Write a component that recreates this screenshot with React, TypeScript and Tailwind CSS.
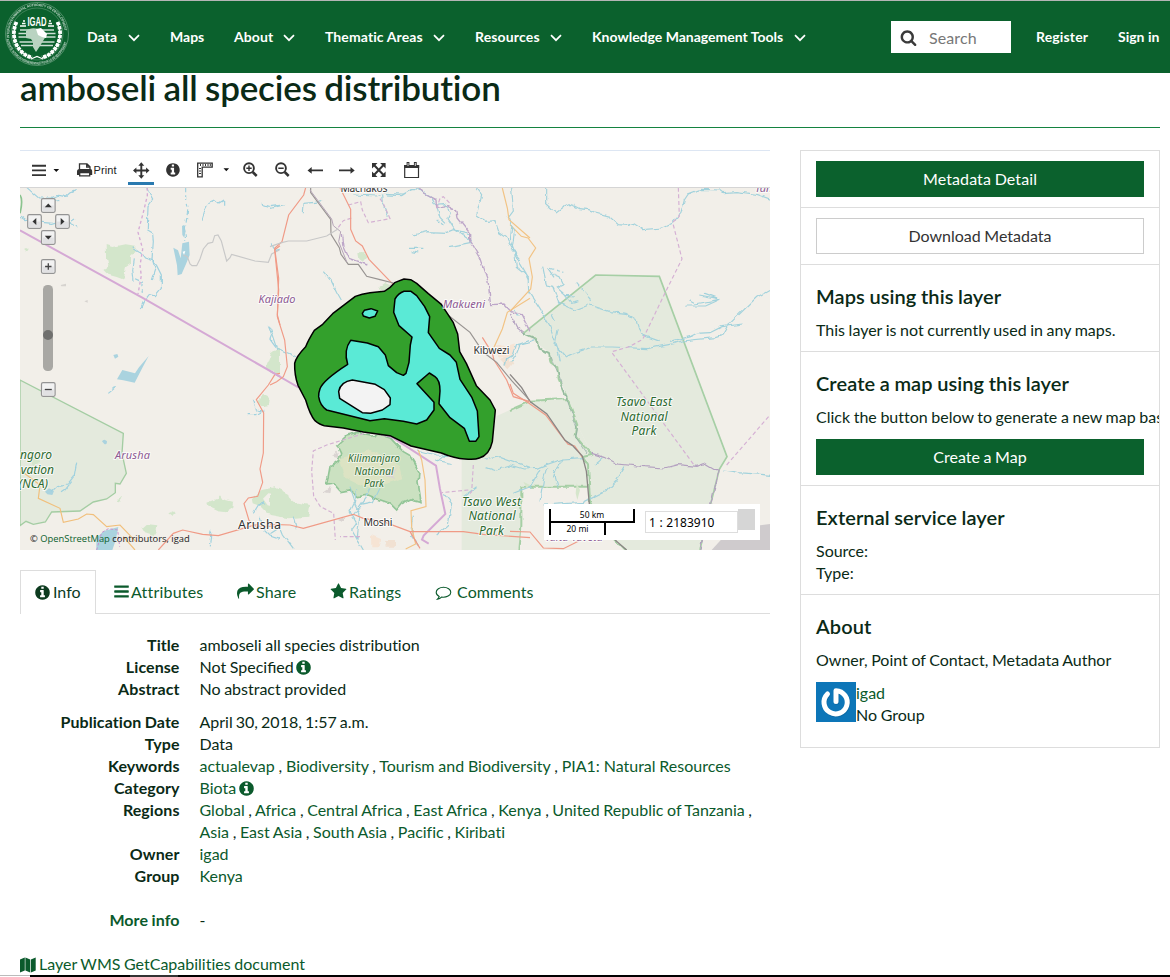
import React from "react";

const FA = {
  info: "M1152 1376v-160q0-14-9-23t-23-9h-96v-512q0-14-9-23t-23-9h-320q-14 0-23 9t-9 23v160q0 14 9 23t23 9h96v320h-96q-14 0-23 9t-9 23v160q0 14 9 23t23 9h448q14 0 23-9t9-23zm-128-896v-160q0-14-9-23t-23-9h-192q-14 0-23 9t-9 23v160q0 14 9 23t23 9h192q14 0 23-9t9-23zm640 416q0 209-103 385.500t-279.500 279.500-385.500 103-385.500-103-279.500-279.500-103-385.500 103-385.500 279.500-279.500 385.500-103 385.500 103 279.500 279.500 103 385.500z",
  bars: "M1664 1344v128q0 26-19 45t-45 19h-1408q-26 0-45-19t-19-45v-128q0-26 19-45t45-19h1408q26 0 45 19t19 45zm0-512v128q0 26-19 45t-45 19h-1408q-26 0-45-19t-19-45v-128q0-26 19-45t45-19h1408q26 0 45 19t19 45zm0-512v128q0 26-19 45t-45 19h-1408q-26 0-45-19t-19-45v-128q0-26 19-45t45-19h1408q26 0 45 19t19 45z",
  share: "M1792 640q0 26-19 45l-512 512q-19 19-45 19t-45-19-19-45v-256h-224q-98 0-175.500 6t-154 21.500-133 42.500-105.500 69.500-80 101-48.500 138.500-17.500 181q0 55 5 123 0 6 2.500 23.500t2.500 26.500q0 15-8.500 25t-23.500 10q-16 0-28-17-7-9-13-22t-13.500-30-10.500-24q-127-285-127-451 0-199 53-333 162-403 875-403h224v-256q0-26 19-45t45-19 45 19l512 512q19 19 19 45z",
  star: "M1728 647q0 22-26 48l-363 354 86 500q1 7 1 20 0 21-10.500 35.500t-30.500 14.500q-19 0-40-12l-449-236-449 236q-22 12-40 12-21 0-31.500-14.500t-10.500-35.500q0-6 2-20l86-500-364-354q-25-27-25-48 0-37 56-46l502-73 225-455q19-41 49-41t49 41l225 455 502 73q56 9 56 46z",
  search: "M1216 832q0-185-131.500-316.500t-316.500-131.500-316.500 131.500-131.500 316.500 131.500 316.500 316.500 131.500 316.500-131.500 131.500-316.500zm512 832q0 52-38 90t-90 38q-54 0-90-38l-343-342q-179 124-399 124-143 0-273.500-55.500t-225-150-150-225-55.500-273.500 55.500-273.500 150-225 225-150 273.500-55.500 273.500 55.500 225 150 150 225 55.500 273.500q0 220-124 399l343 343q37 37 37 90z",
};

function Glyph({ d, size, className = "" }: { d: string; size: number; className?: string }) {
  return (
    <svg width={size} height={size} viewBox="0 0 1792 1792" fill="currentColor" className={"shrink-0 " + className}>
      <path d={d} />
    </svg>
  );
}

function Logo() {
  return (
    <svg width="66" height="66" viewBox="-33 -33 66 66" className="shrink-0" fill="none" stroke="#fff">
      <defs>
        <path id="ringTop" d="M-27.500 4A27.800 27.800 0 1 1 27.500 4" />
        <path id="ringBottom" d="M-30.500 5A31 31 0 0 0 30.500 5" />
      </defs>
      <circle r="31.500" strokeWidth=".7" opacity=".4" />
      <circle r="26" strokeWidth=".6" opacity=".35" />
      <g fill="#fff" stroke="none" fontFamily="Liberation Sans" fontSize="3.500" opacity=".75">
        <text textLength="88" lengthAdjust="spacingAndGlyphs"><textPath href="#ringTop">INTERGOVERNMENTAL AUTHORITY ON DEVELOPMENT</textPath></text>
        <text textLength="82" lengthAdjust="spacingAndGlyphs"><textPath href="#ringBottom">AUTORITÉ INTERGOUVERNEMENTALE POUR LE DÉVELOPPEMENT</textPath></text>
      </g>
      <path d="M-20-12C-28 4 -18 21 -5 23.500M20-12C28 4 18 21 5 23.500" strokeWidth="1" />
      <path d="M-20.500-12C-28 4 -18 21 -5 23.500M20.500-12C28 4 18 21 5 23.500" strokeWidth="3.800" strokeDasharray="3.400 1" />
      <path d="M-6 25l6-2.500 6 2.500" strokeWidth="1.200" />
      <path d="M-17-4h34M-18.500-.5h37M-18.500 3h37M-17.500 8h35M-16 11.500h32" strokeWidth="1.300" opacity=".8" />
      <path d="M-17-8h6M-15-10.500h3.500M-14-13h2M11-8h6M11.500-10.500h3.500M12-13h2" strokeWidth="1.500" />
      <path d="M-11-3c3-3 8-3.500 12-2l8 7-3 5-3 5-4 6-3-5v-5l-2-3-5-1z" fill="#b9d3c1" stroke="none" />
      <path d="M-1-5l5-1 6 6-1 4-4-1-4-2z" fill="#fff" stroke="none" />
      <text x="0" y="-8" textAnchor="middle" textLength="19" lengthAdjust="spacingAndGlyphs" fontFamily="Liberation Sans" fontWeight="700" fontSize="12" fill="#fff" stroke="none">IGAD</text>
    </svg>
  );
}

const Chevron = () => (
  <svg width="12" height="8" viewBox="0 0 12 8" fill="none" stroke="#fff" strokeWidth="1.700" className="mt-[3px] shrink-0">
    <path d="M1 1.200l5 5 5-5" />
  </svg>
);

function NavItem({ label, menu, className }: { label: string; menu?: boolean; className: string }) {
  return (
    <div className={"-mt-[2px] flex shrink-0 items-center justify-between pr-[30px] " + className}>
      <span className="whitespace-nowrap">{label}</span>
      {menu && <Chevron />}
    </div>
  );
}

function Header() {
  return (
    <header className="flex h-[73px] shrink-0 items-center border-t border-[#b5b5b5] bg-[#0b612d] pl-[4px] text-[14px] font-bold text-white">
      <div className="-mt-[6px] mr-[17px] flex"><Logo /></div>
      <NavItem label="Data" menu className="w-[83px] tracking-[0.1px]" />
      <NavItem label="Maps" className="w-[64px]" />
      <NavItem label="About" menu className="w-[91px] tracking-[0.1px]" />
      <NavItem label="Thematic Areas" menu className="w-[150px] tracking-[0.1px]" />
      <NavItem label="Resources" menu className="w-[117px] tracking-[0.150px]" />
      <NavItem label="Knowledge Management Tools" menu className="w-[244px]" />
      <div className="ml-[55px] flex h-[32px] w-[120px] shrink-0 items-center bg-white pl-[9px] text-[16px] font-normal text-[#777]">
        <Glyph d={FA.search} size={17} className="text-[#3a3a3a]" />
        <span className="ml-[12px] mt-px tracking-[0.1px]">Search</span>
      </div>
      <span className="-mt-[2px] ml-[25px] w-[82px] shrink-0 tracking-[0.15px]">Register</span>
      <span className="-mt-[2px] whitespace-nowrap">Sign in</span>
    </header>
  );
}

function Toolbar() {
  return (
    <svg width="750" height="37" viewBox="20 151 750 37" fill="none" stroke="#333" className="block">
      <path d="M32 165.700h14M32 170.400h14M32 175.100h14" strokeWidth="1.900" />
      <path d="M53.500 169h5.600l-2.800 3zM223.500 168.200h5.600l-2.800 3z" fill="#111" stroke="none" />
      <path d="M79.500 170v-6.200h7.500l3 3v3.200M86.700 164v3h3" strokeWidth="1.300" />
      <path d="M77 171.500q0-2.500 2.500-2.500h10.700q2 0 2 2v4h-3v-2.300h-9.300v2.300h-2.900z" fill="#333" stroke="none" />
      <path d="M79.700 172.600h10v3.300h-10z" fill="#fff" strokeWidth="1.300" />
      <text x="93.500" y="174" fontFamily="Liberation Sans" fontSize="11" fill="#222" stroke="none" textLength="23">Print</text>
      <path d="M141.300 164v13M134.500 170.500h13.500" strokeWidth="1.900" />
      <path d="M141.300 162.300l3 3.400h-6zM141.300 178.700l3-3.400h-6zM133 170.500l3.400-3v6zM149.500 170.500l-3.400-3v6z" fill="#333" stroke="none" />
      <path d="M128 182h26v3h-26z" fill="#2a7ab0" stroke="none" />
      <g transform="translate(165 162) scale(.00885)" fill="#333" stroke="none"><path d={FA.info} /></g>
      <path d="M197.700 163.200h14.500v4h-10v9.700h-4.500z" strokeWidth="1.300" />
      <path d="M200.500 164v2M203 164v2M205.500 164v2M208 164v2M210.300 164v2M199 168.500h2M199 171h2M199 173.500h2" strokeWidth="1" />
      <g strokeWidth="1.900">
        <circle cx="249" cy="168.200" r="4.900" /><path d="M252.700 172l4 4" strokeWidth="2.500" />
        <circle cx="281" cy="168.200" r="4.900" /><path d="M284.700 172l4 4" strokeWidth="2.500" />
      </g>
      <path d="M246.300 168.200h5.400M249 165.500v5.400M278.300 168.200h5.400" strokeWidth="1.400" />
      <path d="M309 170.400h14M339 170.400h14" strokeWidth="1.800" />
      <path d="M307.500 170.400l4.200-3.400v6.800zM354.700 170.400l-4.200-3.400v6.800z" fill="#333" stroke="none" />
      <path d="M374 165l9.500 10M383.500 165l-9.500 10" strokeWidth="2" />
      <path d="M372 163h5.500l-5.500 5.500zM385.600 163h-5.500l5.500 5.500zM372 177h5.500l-5.500-5.500zM385.600 177h-5.500l5.500-5.500z" fill="#333" stroke="none" />
      <path d="M404.700 165.700h13.800v11.800h-13.800z" strokeWidth="1.200" />
      <path d="M404.200 165h15v3h-15z" fill="#333" stroke="none" />
      <path d="M408 162v4.500M415.300 162v4.500" strokeWidth="2.800" />
      <path d="M408 163v3M415.300 163v3" stroke="#fff" strokeWidth=".8" />
      <path d="M20 187.500h750" stroke="#d5d5d5" />
    </svg>
  );
}

function WestTerrain() {
  return (
    <g transform="translate(20 180) scale(.33333)">
      <path d="M0 600L310 760 306 820 319 880 300 912 286 910V938L260 957 220 966 180 993 95 996 76 1026 40 1033 18 1024 0 1037z" fill="#e4eadd" stroke="#a4cda3" strokeWidth="4" />
      <path d="M0 45q10 15 0 55" stroke="#8bc48f" strokeWidth="5" />
      <g fill="#d3e6cb" stroke="none" filter="url(#ragged)">
        <path d="M257 195l20 6 40-8 28 4 5 15-20 18 0 20-12 8-6 38-22-8-30-8-12-12 18-10-8-35z" />
        <path d="M562 968l28-10 10-12 8 12 34 8-2 14-20 14-28-3-26-12z" />
        <path d="M366 1045l14-13 32 4-3 20-8 12-26-8z" />
        <path d="M695 955l30-25 40-8 40 20 5 40-30 24-40-8-20-20-22-8z" />
        <path d="M738 560l15-40 27-20v80l-15-3z" />
        <path d="M715 655l15-10 16 10-2 20-20 4-10-12z" />
        <path d="M445 1000l14-6 5 6-8 8zM290 965l14-17 3 5-10 14zM14 205h8v10h-8zM28 835l22-2 8 15-18 8z" />
      </g>
      <path d="M745 940l18 2 8 18-10 20-18-4-14-20z" fill="#f2efe9" />
      <g fill="#aad3df" stroke="none">
        <path d="M460 203l14 8 8 24 5-45 20-5 2 40-10 25-14 32-12 4-2-30zM486 138l6-3 5 18-4 20-6-8zM291 598l16-28 38 10 12-18 29-34-18 34-24 46-34-7zM280 525l12-3 3 8-10 6zM75 935l12-10 15 8-5 12-15-2zM229 1075l22-22 44-12-8 40-10 29h-48zM246 784q6-10 15 0 0 12-8 8z" />
      </g>
      <path d="M488 215l8-2-4 12z" fill="#fff" />
      <g stroke="#9fd1df" strokeWidth="3.500" fill="none" filter="url(#ragged)">
        <path d="M20 22l20 18 16 14 36 0 20-8 26 3 14-13 18-7M95 53l20 10M0 112l15 10 28-4M65 127l33 3 30-9 44 24M150 130l15-10M380 25l18 32-14 20-2 75 16 10 2 22-4 55 14 18 14 28v40l-18 22-20-2-8 10-14 32M338 200l20 14 16 20 24 8 9 28-10 30M340 238l-5 35 4 30M545 122l10-32 12-23 18-8 12 10 14-8v16M725 72l25 8 30-4M757 190l8 25 14-4M745 438l10 25-5 12 18 25M683 704h25l16-8M700 660l10 30 20 4M170 848l-7 40-20 24-30 5-20 20M155 905l-20 25-12 8M262 640l22-18M569 1049l6 20-4 30M700 1000l15-25 20-7M720 1010l10 35 20 20 30 10" />
        <path d="M497 23v40l6 30-8 60 2 32M345 296l22 10-4 32" strokeDasharray="14 9" />
      </g>
      <path d="M490 225l12 5 8 22 6 5 14 0 10-20 10-30 14-17 14-3 6-20 10-2 10 18 16 60 10-10 5-10 70 20 40 4 10-25 23-12" stroke="#c8c8c8" strokeWidth="3.500" />
      <path d="M382 23v24l-12 50-16 60 14 50-8 50 4 30-10 55" stroke="#d5abd5" strokeWidth="4" strokeDasharray="9 8" />
      <path d="M0 151L368 354 780 590" stroke="#d5a9d5" strokeWidth="6" />
      <path d="M0 870l40 30 20 15-5 40 65 30 10 42 45-10 25-15 20 2 40 36 40-5 48 50M310 1070l35 40" stroke="#f1bf7b" strokeWidth="3.500" />
      <path d="M780 197l-16 12 12 120-4 76 8 30M780 580l-15 3-20 32-36 44 22 40-1 120-10 48 8 40-15 42-28 5-13 17 15 50 20 17 60 1M415 1110l45-50 28-10 60 13 47 4 120-35" stroke="#f09a86" strokeWidth="3.500" />
      <path d="M230 1110l15-52 20-12 28 4 6 50" stroke="#c990cf" strokeWidth="3" strokeDasharray="8 6" />
      <path d="M122 315l16-4v8h-14zM193 364l10-4v8z" fill="#d6d3cf" stroke="none" />
    </g>
  );
}

function EastTerrain() {
  return (
    <g transform="translate(510 180) scale(.33333)">
      <path d="M0 690L64 662 173 657 202 735 245 820 220 828 234 852 240 920H34V1040L28 1110H-145V830L-60 780-40 708z" fill="#e4eadd" stroke="none" />
      <path d="M40 460L257 285 448 289 651 830 628 868 590 1020 570 1110H345L305 1070 240 975 234 852 218 828 245 820 202 735 173 657 117 517z" fill="#e4eadd" stroke="none" />
      <path d="M40 460L257 285 448 289 651 830 628 868 590 1020 570 1110" stroke="#a6cfa5" strokeWidth="5" />
      <path d="M40 460l40 16 12 34 25 12 5 25 20 15 4 35 27 60 29 78-5 35 30 35 18 20-27 6 16 25 6 110 55 95 50 50M0 690l64-28 109-5M232 920H34v120l-6 70M-145 750v-40l30 120" stroke="#a6cfa5" strokeWidth="6" filter="url(#ragged)" />
      <path d="M42 460l38 18 13 32 24 12 27 55 30 90 28 80-5 25 33 50" stroke="#8aa5a0" strokeWidth="2" filter="url(#ragged)" />
      <path d="M780 1032l-75 10-65 30-35 38h175z" fill="#cfcbcd" stroke="none" />
      <g stroke="#a2d2dc" strokeWidth="3.500" fill="none" filter="url(#ragged)">
        <path d="M107 23v45l32 30 20-15 20-10 10 3 20 10 28 3 22 10 38 10 28 25 24 2 18-6 30 19 60-5 30-14 26-30 10-40 12-18 36-14 60 2 10 8 40-3 60 8 60 22M5 140l-4 40 18 50 35 60 2 44 44 70 18 30 25 70 8 40M145 445l-10 50 32 36 20-10 60-20h60l105 5 80-15 22-8 102-10 24-8 20-35 80-78 40-22 60-15M480 484l60-14 20-10 40-2 36-18 65-8M527 378h60l44-20-75 14-18-10M568 345l62 12-45-17M240 375l60 20 48 5 30 18 14 45 60 22M98 260l12 55 18 4 18 50 50 22 40-16M112 262l20 30M130 282l20 8 12 24-20 10 25 22 28 2M165 345l20 25 20-5M125 402l10 20M0 855l40 12 40-2 20-8 60-20 60-4M160 835l-20 30-10 30M110 862l-10 40-10 60M90 870l-30 50-50 20M130 870l14 50M640 870l30 4 12 4 70 5 28 3M345 860l-25 42-30 30-70 35-120 8M280 833l-25 22M0 555l10-20 10-15 10-25 44-16" />
        <path d="M120 265l40 12M200 310l50 58" strokeDasharray="12 7" />
      </g>
      <path d="M505 23l3 86-20 18 28 110-48 96-70 145-40 22-52 15-1 2 250 342M650 855l130-150" stroke="#d5b0d4" strokeWidth="3.500" strokeDasharray="12 8" />
      <path d="M245 820l40 12 38 20 80 8 60 4 40-10 55 5 22-8 30 18h18M628 868l-40 160-18 82M0 402l20 40 22 18" stroke="#b3a0c0" strokeWidth="3.500" filter="url(#ragged)" />
      <path d="M0 134l34 35 20 5 23 30-20 32 10 55-5 36L0 394" stroke="#f2c384" strokeWidth="3.500" />
      <path d="M0 612l10 28 47 30 50 35 45 60 22 28 20 5 24 35M0 1054l60 2 40 48 60 2 60-30" stroke="#ef9a86" strokeWidth="3.500" />
      <path d="M0 583l35 40 25 42 50 36 55 80 22 15 30 32 12 45 10 110M315 1080l35 30" stroke="#8a8584" strokeWidth="4" />
      <path d="M0 495l15-5-8 25-7 8z" fill="#f6e4d4" stroke="none" />
      <path d="M40 905l20 10-10 10zM200 910l10 20-8 30-5-20z" fill="#d6e6cc" stroke="none" />
    </g>
  );
}

function CentreTerrain() {
  return (
    <g transform="translate(270 180) scale(.33333)">
      <g filter="url(#ragged)">
        <path d="M200 795L232 765 265 757 300 765 325 763 362 775 385 800 400 815 418 825 430 845 440 862 447 880 444 905 453 965 420 957 400 965 380 990 360 970 325 958 295 945 265 950 240 930 212 935 192 912 170 915 180 860 205 842 212 820z" fill="#cbe1c1" stroke="#92c597" strokeWidth="5" />
        <path d="M210 835l60-15 30-10 50 20 40 25 10 40-55 18-60 10-60-30z" fill="#dce3c3" stroke="none" />
        <path d="M340 880l30-10 15-12-20 30 15 10-30-8zM160 935l22-15-4 20zM200 1020l22-10v16zM190 830l10-15 10 20z" fill="#dad4d2" stroke="none" />
        <path d="M0 920l40 15 30 30 50 10-5 35-60 5-55-10zM265 220l15-8 12 20-12 15-12-10zM325 320l20-14 20 8-15 20-20-2z" fill="#d3e6cb" stroke="none" />
        <path d="M345 1080h30v20h-28zM690 540l20-10 20 20-15 18z" fill="#f1e1d2" stroke="none" />
        <path d="M303 1065l30 12-4 25h-25zM675 495l60 5-5 28-40 8z" fill="#f6e4d4" stroke="none" />
      </g>
      <g stroke="#a2d2dc" strokeWidth="3.500" filter="url(#ragged)">
        <path d="M0 85l45-12M100 100l2-30 55-5M250 45l70 3 20-8 60 2 30-15M350 45l45 2 28-18 8 0 8-8 25 20 20 12 12 20 25-2 20 25-10 20 20 30 36 26 15 10M430 165l40-10 60 2 20-8 35 8 15 8M420 205h40M540 200l60-12M425 215l20 4M355 110l-18-40-2-25M500 80l10 35 15 15M620 24l15 20-15 60 30 20 25-2 12 35 22 15 25 45 5 45 25 20 12 18M725 23l5 70-15 20 18 45-7 52 26 30M160 275l25 30 15 30 14 25M0 440l8 20 15 45 55 25M240 920l15 45-15 30 20 35-15 20 35 60M263 925l-8 50 15 30-10 80M300 925l-15 30-35 50M330 925l-20 40-40 8M430 1010l-5 60 20 25M520 940l25 30-10 65-35 30M0 1060l30-20 10 25 30 40M70 1010l10 40M440 810l60 15 80 3M530 820l-25 22M545 850l-50-10M610 825l40 15 40-10 90 32M650 860l30 10 40-12M620 920l-40 30M780 485l-40 10-10 30-20 12-5 20" />
        <path d="M500 120l20 15M730 390l15 20" strokeDasharray="10 5" />
      </g>
      <path d="M445 20l18 22 35 18 2 25 35-5 25 12 4 22 35 45v25l30 50 25 70 8 70 40-2 22 24 30 8 26 50M217 160l5 40 15 35 55 20" stroke="#bda6c9" strokeWidth="4" filter="url(#ragged)" />
      <path d="M235 75l37-10 5 25 18 38 65-12-20-45-10-15M500 85l10-30 10-5 20 20M300 755l-130 40-40 18-5 60 6 75 20 32 40 20 5 80M270 1070l-60 0M610 855l-5 80-10 10M595 930l-80 8M205 142l15-20 25-8" stroke="#d4b1d3" strokeWidth="3.500" strokeDasharray="12 7" />
      <path d="M0 573L85 622M285 751l80 20 133 86 12 70 16 75-65 65-5 12 20 12" stroke="#d5a9d5" strokeWidth="6" />
      <path d="M697 24l15 60 5 35 63 55M780 355l-68 42-15 50-25 55M445 810l10 30 10 60 3 80-45 12 2 50 12 50-30 15" stroke="#f2c384" strokeWidth="3.500" />
      <path d="M107 23l-6 22-45 60-20 80-22 20 12 90-4 115 22 70 8 80-12 30-20 15-20 10M210 23l32 65v60l15 35 20 15 20 40 73 76M780 665l-50-15-20-50-38-60-5-20-30-48M0 1033l60 2 40 10 150-42 30 12 60 10 80 30h160l60 8 140 10M420 1055l30 50" stroke="#f09a86" strokeWidth="3.500" />
      <path d="M122 23v15l60 80 1 45 25 40 5 20 22 30h30l25 36 40 10 40 10M530 402l70 55 40 60 40 30 45 55 55 60" stroke="#979391" strokeWidth="3.500" />
      <path d="M120 30l65 87 5 20 22 18-6 30 24 60" stroke="#b5a5b8" strokeWidth="3" />
      <path d="M0 200l35-12 20-5 55 0 60-15 35-22" stroke="#c8c8c8" strokeWidth="3.500" />
    </g>
  );
}

function Distribution() {
  return (
    <g transform="translate(270 180) scale(.33333)" stroke="#000" strokeWidth="4.500" strokeLinejoin="round">
      <path d="M343 334Q360 325 374 308L402 297 422 299 440 310 475 341 514 373 550 428 563 462 569 515 589 550 619 617 660 660 676 690 667 785Q658 826 628 834Q615 840 585 837Q555 836 514 819L423 798 360 767 280 756 220 744 163 737Q150 735 135 722Q120 705 107 660L84 616Q73 585 74 550Q78 530 107 500Q115 480 133 451L158 433 188 401 256 349Q275 341 300 338z" fill="#33a02c" />
      <path d="M375 357Q385 340 402 334L423 334 440 347 464 380 479 410 475 458 508 505 540 525 559 547 570 598 606 653 622 693 627 770 617 784 598 784 583 745 540 713 507 671 510 633Q510 600 495 590L478 579 441 611 492 667V690L470 720 440 732 400 724 343 716 300 722 170 690Q150 677 146 650Q145 640 150 626Q160 600 233 553Q220 510 242 481L292 489 325 500 346 525 355 557 380 578 400 586 408 580 417 547 421 495 426 471 387 437 371 397z" fill="#5aead6" />
      <path d="M277 400L283 391 303 386 323 393 315 409 298 414 280 408z" fill="#5aead6" />
      <path d="M206 634Q212 605 247 600L316 613 343 629 361 654 360 674 337 690 302 700 277 698 209 655z" fill="#f3f3f3" />
    </g>
  );
}

function MapLabels() {
  const halo = { paintOrder: "stroke" as const };
  return (
    <g fontFamily="Noto Sans" textAnchor="middle" stroke="#fff" strokeOpacity=".75" strokeWidth="2" strokeLinejoin="round" style={halo}>
      <g fontSize="10.500" fill="#333">
        <text x="364" y="192" textLength="47">Machakos</text>
        <text x="491.500" y="354" textLength="36">Kibwezi</text>
        <text x="378" y="526" textLength="29">Moshi</text>
        <text x="259.500" y="529" fontSize="12.500" textLength="43">Arusha</text>
      </g>
      <g fontSize="11" fontStyle="italic" fill="#8d5a93">
        <text x="277" y="303" textLength="37">Kajiado</text>
        <text x="464" y="308" textLength="42">Makueni</text>
        <text x="132.500" y="459" textLength="35">Arusha</text>
        <text x="755" y="192" textAnchor="start">Tana</text>
        <text x="574" y="541" textLength="58">Taita-Taveta</text>
      </g>
      <g fontSize="12" fontStyle="italic" fill="#2c6a30">
        <text x="644" y="406" textLength="56">Tsavo East</text>
        <text x="644" y="420.500" textLength="47">National</text>
        <text x="644" y="435" textLength="25">Park</text>
        <text x="491.500" y="505.500" textLength="59">Tsavo West</text>
        <text x="492" y="520" textLength="47">National</text>
        <text x="491.500" y="535" textLength="25">Park</text>
        <text x="52" y="459" textAnchor="end">ngoro</text>
        <text x="54" y="473.500" textAnchor="end">vation</text>
        <text x="48" y="488" textAnchor="end">(NCA)</text>
      </g>
      <g fontSize="10" fontStyle="italic" fill="#2c6a30" strokeOpacity=".5">
        <text x="374" y="462" textLength="52">Kilimanjaro</text>
        <text x="374" y="474.500" textLength="39">National</text>
        <text x="374" y="487" textLength="20">Park</text>
      </g>
    </g>
  );
}

function MapButton({ x, y, d, solid }: { x: number; y: number; d: string; solid?: boolean }) {
  return (
    <g transform={"translate(" + x + " " + y + ")"}>
      <rect x="-6.800" y="-6.800" width="13.600" height="13.600" rx="1.500" fill="#f2f2f2" stroke="#949494" strokeWidth="1.200" />
      <rect x="-5.500" y="0" width="11" height="5.500" fill="#e1e1e3" />
      <path d={d} fill={solid ? "#333" : "none"} stroke={solid ? "none" : "#444"} strokeWidth="1.300" />
    </g>
  );
}

function MapView() {
  return (
    <div className="relative h-[362px] w-[750px] overflow-hidden">
      <svg width="750" height="362" viewBox="20 188 750 362" fill="none" className="block">
        <defs>
          <filter id="ragged" x="-5%" y="-5%" width="110%" height="110%" colorInterpolationFilters="sRGB">
            <feTurbulence type="fractalNoise" baseFrequency=".04" numOctaves="2" seed="4" result="noise" />
            <feDisplacementMap in="SourceGraphic" in2="noise" scale="15" xChannelSelector="R" yChannelSelector="G" />
          </filter>
        </defs>
        <rect x="20" y="188" width="750" height="362" fill="#f2efe9" />
        <WestTerrain />
        <EastTerrain />
        <CentreTerrain />
        <Distribution />
        <MapLabels />
        <MapButton x={48.300} y={205.500} d="M-3.500 1.800h7L0-2z" solid />
        <MapButton x={34.500} y={221.500} d="M1.800-3.500v7L-2 0z" solid />
        <MapButton x={62.500} y={221.500} d="M-1.800-3.500v7L2 0z" solid />
        <MapButton x={48.300} y={237.500} d="M-3.500-1.800h7L0 2z" solid />
        <MapButton x={48.300} y={266.500} d="M-3.200 0h6.400M0-3.200v6.400" />
        <MapButton x={48.300} y={389.500} d="M-3.500 0h7" />
        <rect x="43" y="285" width="10" height="86" rx="4.500" fill="#a9a8a4" />
        <circle cx="48" cy="335" r="5" fill="#70706e" />
      </svg>
      <div className="absolute bottom-[3px] left-[10px] font-['Open_Sans',sans-serif] text-[9.400px] leading-[16px] whitespace-nowrap text-[#222]">
        © <span className="text-[#0b612d]">OpenStreetMap</span> contributors, igad
      </div>
      <div className="absolute top-[316px] left-[524px] flex h-[36px] w-[216px] bg-white font-['Noto_Sans',sans-serif] text-black">
        <div className="mt-[5px] ml-[5px] w-[86px] text-center text-[8.500px] leading-[12px]">
          <div className="h-[14px] border-x-2 border-b-2 border-black">50 km</div>
          <div className="h-[12px] w-[57px] border-x-2 border-black leading-[11px]">20 mi</div>
        </div>
        <div className="mt-[7px] ml-[10px] h-[22px] w-[93px] border border-[#ddd] pl-[3px] text-[12px] leading-[21px] [word-spacing:0.5px] whitespace-nowrap">1 : 2183910</div>
        <div className="mt-[5px] h-[21px] w-[17px] bg-[#d6d6d6]" />
      </div>
    </div>
  );
}

function Tabs() {
  return (
    <div className="mt-[20px] flex h-[44px] border-b border-[#ddd] text-[16px] text-[#0b5a2c]">
      <div className="-mb-px flex h-[44px] w-[76px] shrink-0 items-center border border-b-0 border-[#ddd] bg-white pb-px pl-[13px] text-[#0d3b1f]">
        <Glyph d={FA.info} size={17} /><span className="ml-[2px]">Info</span>
      </div>
      <div className="flex w-[123px] shrink-0 items-center pl-[17px] tracking-[0.2px]">
        <Glyph d={FA.bars} size={17} /><span className="ml-px">Attributes</span>
      </div>
      <div className="flex w-[95px] shrink-0 items-center pl-[18px] tracking-[0.2px]">
        <Glyph d={FA.share} size={17} /><span className="ml-[2px]">Share</span>
      </div>
      <div className="flex w-[104px] shrink-0 items-center pl-[16px] tracking-[0.1px]">
        <Glyph d={FA.star} size={17} /><span className="ml-[2px]">Ratings</span>
      </div>
      <div className="flex shrink-0 items-center pl-[17px] tracking-[0.1px]">
        <svg width="17" height="16" viewBox="0 0 17 16" fill="none" stroke="currentColor" strokeWidth="1.100" className="mt-[2px]">
          <path d="M8.500 2.200c-4 0-7.300 2.300-7.300 5 0 1.900 1.200 3.300 3 4.200-.2 1.200-.9 2-1.700 2.700 1.600-.2 3-.9 4-2 5.200.6 9.300-1.700 9.300-4.900 0-2.700-3.300-5-7.300-5z" />
        </svg>
        <span className="ml-[5px]">Comments</span>
      </div>
    </div>
  );
}

function Row({ label, children, className = "" }: { label: string; children: React.ReactNode; className?: string }) {
  return (
    <div className={"flex leading-[22px] " + className}>
      <dt className="-ml-[0.5px] w-[160px] shrink-0 text-right font-bold tracking-[0.080px] [word-spacing:-0.5px]">{label}</dt>
      <dd className="ml-[20px] w-[560px] whitespace-nowrap">{children}</dd>
    </div>
  );
}

function Links({ items, trailing }: { items: string[]; trailing?: boolean }) {
  return (
    <>
      {items.map((t, i) => (
        <React.Fragment key={t}>
          <span className="text-[#0b5a2c]">{t}</span>
          {(i < items.length - 1 || trailing) && " , "}
        </React.Fragment>
      ))}
    </>
  );
}

const InfoMark = () => <Glyph d={FA.info} size={17} className="-mt-[3px] -ml-[2px] inline text-[#0b5a2c]" />;

function Details() {
  return (
    <dl className="mt-[20px] text-[16px] [word-spacing:-0.500px]">
      <Row label="Title">amboseli all species distribution</Row>
      <Row label="License"><span className="[font-variant-ligatures:normal]">Not Specified</span> <InfoMark /></Row>
      <Row label="Abstract">No abstract provided</Row>
      <Row label="Publication Date" className="mt-[11px] [&>dd]:[word-spacing:-1px]">April 30, 2018, 1:57 a.m.</Row>
      <Row label="Type">Data</Row>
      <Row label="Keywords" className="[&>dd]:[word-spacing:-0.300px]"><Links items={["actualevap", "Biodiversity", "Tourism and Biodiversity", "PIA1: Natural Resources"]} /></Row>
      <Row label="Category"><span className="text-[#0b5a2c]">Biota</span> <InfoMark /></Row>
      <Row label="Regions">
        <Links items={["Global", "Africa", "Central Africa", "East Africa", "Kenya", "United Republic of Tanzania"]} trailing />
        <br />
        <Links items={["Asia", "East Asia", "South Asia", "Pacific", "Kiribati"]} />
      </Row>
      <Row label="Owner"><Links items={["igad"]} /></Row>
      <Row label="Group"><Links items={["Kenya"]} /></Row>
      <Row label="More info" className="mt-[22px] [&>dt]:text-[#0b5a2c]">-</Row>
    </dl>
  );
}

function Heading({ children }: { children: React.ReactNode }) {
  return <h4 className="text-[20px] leading-[22px] font-semibold tracking-[0.080px]">{children}</h4>;
}

function Sidebar() {
  return (
    <aside className="mt-[22px] flex h-[598px] w-[360px] shrink-0 flex-col overflow-hidden border border-[#ddd] text-[16px] leading-[22px] [word-spacing:-0.500px] whitespace-nowrap">
      <section className="h-[57px] shrink-0 border-b border-[#ddd] px-[15px] pt-[10px]">
        <div className="h-[36px] bg-[#0b612d] text-center leading-[36px] tracking-[0.1px] text-white">Metadata Detail</div>
      </section>
      <section className="h-[57px] shrink-0 border-b border-[#ddd] px-[15px] pt-[10px]">
        <div className="h-[36px] border border-[#ccc] text-center leading-[34px] text-[#333]">Download Metadata</div>
      </section>
      <section className="h-[87px] shrink-0 border-b border-[#ddd] px-[15px] pt-[20px]">
        <Heading>Maps using this layer</Heading>
        <p className="mt-[12px]">This layer is not currently used in any maps.</p>
      </section>
      <section className="h-[134px] shrink-0 border-b border-[#ddd] pt-[20px] pl-[15px]">
        <Heading>Create a map using this layer</Heading>
        <p className="mt-[12px] overflow-hidden">Click the button below to generate a new map based on this layer.</p>
        <div className="mt-[11px] mr-[15px] h-[36px] bg-[#0b612d] text-center leading-[36px] text-white">Create a Map</div>
      </section>
      <section className="h-[109px] shrink-0 border-b border-[#ddd] px-[15px] pt-[20px]">
        <Heading>External service layer</Heading>
        <p className="mt-[12px]">Source:</p>
        <p>Type:</p>
      </section>
      <section className="px-[15px] pt-[20px]">
        <Heading>About</Heading>
        <p className="mt-[12px]">Owner, Point of Contact, Metadata Author</p>
        <div className="mt-[11px] flex">
          <svg width="40" height="40" viewBox="0 0 40 40" className="shrink-0" fill="none" strokeLinecap="round">
            <rect width="40" height="40" fill="#0d76b8" />
            <path d="M11.500 12A11.600 11.600 0 1 0 20 8.700V19.500" stroke="#085a8e" strokeWidth="5" transform="translate(.6 .8)" opacity=".5" />
            <path d="M11.500 12A11.600 11.600 0 1 0 20 8.700V19.500" stroke="#fff" strokeWidth="5" strokeLinejoin="round" />
          </svg>
          <div><div className="text-[#0b5a2c]">igad</div><div>No Group</div></div>
        </div>
      </section>
    </aside>
  );
}

export default function App() {
  return (
    <div className="flex h-[977px] w-[1170px] flex-col overflow-hidden bg-white font-[Lato,sans-serif] text-[#0a2a16] [font-variant-ligatures:none]">
      <Header />
      <main className="h-[902px] shrink-0 pr-[10px] pl-[20px]">
        <h2 className="h-[54px] text-[35px] leading-[28px] font-semibold tracking-[-0.180px] whitespace-nowrap [word-spacing:-1px]">amboseli all species distribution</h2>
        <div className="h-px bg-[#148340]" />
        <div className="flex justify-between">
          <div className="mt-[22px] w-[750px]">
            <div className="h-px bg-[#dde6f3]" />
            <Toolbar />
            <MapView />
            <Tabs />
            <Details />
            <div className="mt-[22px] flex items-center leading-[22px] text-[#0b5a2c]">
              <svg width="16" height="16" viewBox="0 0 16 16" className="mt-px shrink-0" fill="currentColor">
                <path d="M0 2.500L4.800.5v13L0 15.500zM5.400.5l4.800 2v13l-4.800-2zM10.900 2.500L15.700.5v13l-4.800 2z" />
              </svg>
              <span className="ml-[3px] [word-spacing:-0.500px]">Layer WMS GetCapabilities document</span>
            </div>
          </div>
          <Sidebar />
        </div>
      </main>
      <div className="flex h-[2px] shrink-0">
        <div className="h-px w-[30px] bg-[#bbb]" />
        <div className="w-[100px] bg-black" />
        <div className="w-[48px] bg-[#333]" />
        <div className="grow bg-black" />
      </div>
    </div>
  );
}
